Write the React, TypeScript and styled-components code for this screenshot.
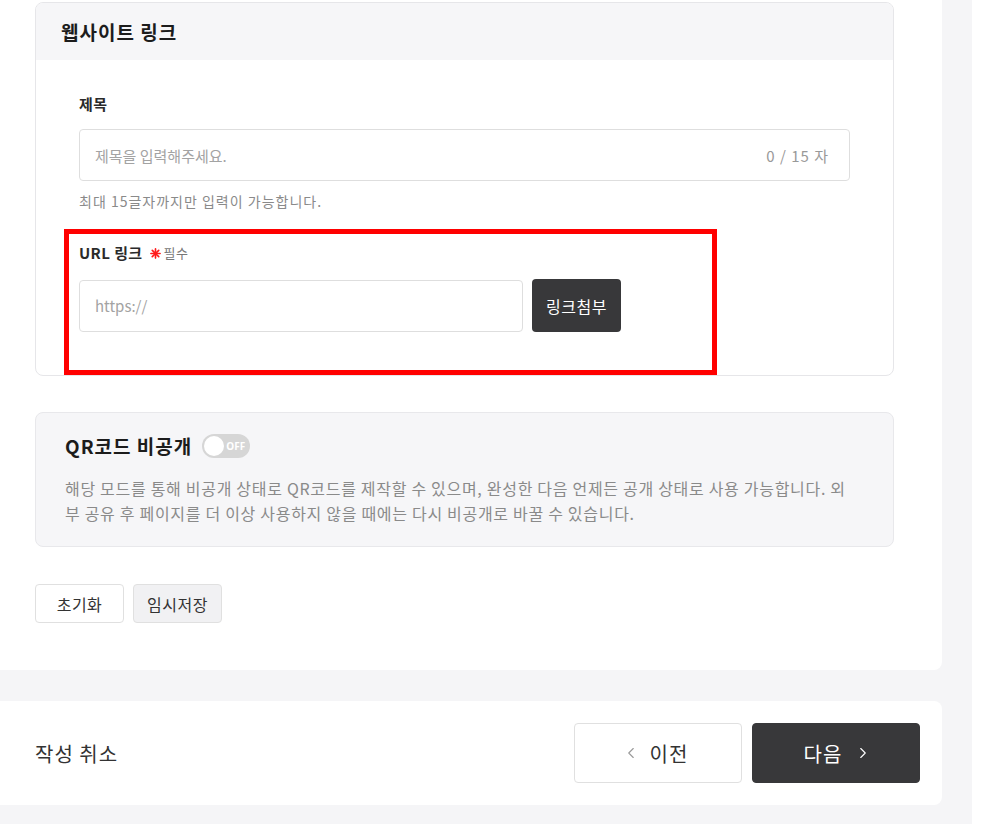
import React from "react";
import styled, { createGlobalStyle } from "styled-components";
import { ChevronLeft, ChevronRight } from "lucide-react";

const Global = createGlobalStyle`
  html, body { margin: 0; padding: 0; background: #ffffff; }
  * { box-sizing: border-box; }
  body { font-family: "Noto Sans CJK KR", "Noto Sans", sans-serif; color: #222; }
  input, button { font-family: inherit; }
`;

const Page = styled.div`
  display: flex;
  width: 1001px;
  height: 824px;
  overflow: hidden;
  background: #ffffff;
`;

const Main = styled.div`
  width: 972px;
  background: #f5f5f7;
  display: flex;
  flex-direction: column;
  padding-right: 30px;
`;

const FormCard = styled.div`
  background: #ffffff;
  border-radius: 0 0 8px 0;
  padding: 2px 48px 47px 35px;
  display: flex;
  flex-direction: column;
`;

const Section = styled.section`
  border: 1px solid #e6e6e9;
  border-radius: 8px;
  overflow: hidden;
  display: flex;
  flex-direction: column;
`;

const SectionHeader = styled.div`
  height: 57px;
  background: #f6f6f8;
  display: flex;
  align-items: center;
  padding-left: 25px;
`;

const SectionTitle = styled.h2`
  margin: 0;
  font-size: 19px;
  font-weight: 700;
  color: #1c1c1c;
  letter-spacing: 1px;
`;

const SectionBody = styled.div`
  padding: 33px 43px 0 43px;
  display: flex;
  flex-direction: column;
`;

const Label = styled.div`
  display: flex;
  align-items: center;
  gap: 7px;
  font-size: 15px;
  line-height: 22px;
  font-weight: 700;
  color: #2a2a2a;
  margin-bottom: 14px;
  letter-spacing: 0.4px;
`;

const Required = styled.span`
  display: inline-flex;
  align-items: center;
  gap: 3px;
  font-size: 13px;
  font-weight: 400;
  color: #777;
  letter-spacing: 0.6px;
`;

const InputBox = styled.div<{ $width?: string }>`
  height: 52px;
  width: ${(p) => p.$width || "100%"};
  border: 1px solid #dedede;
  border-radius: 4px;
  background: #fff;
  display: flex;
  align-items: center;
  padding: 0 20px 0 15px;
`;

const TextInput = styled.input`
  flex: 1;
  min-width: 0;
  border: none;
  outline: none;
  background: transparent;
  font-size: 15px;
  color: #333;
  padding: 0;
  &::placeholder { color: #a3a3a3; }
`;

const Counter = styled.span`
  font-size: 15px;
  color: #999;
  white-space: nowrap;
  letter-spacing: 1px;
`;

const Helper = styled.div`
  margin-top: 10px;
  font-size: 14px;
  line-height: 20px;
  color: #8a8a8a;
  letter-spacing: 1px;
`;

const Highlight = styled.div`
  margin: 18px 0 0 -15px;
  width: 653px;
  border: 5px solid #ff0000;
  padding: 8px 10px 38px 10px;
  display: flex;
  flex-direction: column;
`;

const UrlRow = styled.div`
  display: flex;
  align-items: center;
  gap: 9px;
  margin-top: 1px;
`;

const DarkButton = styled.button`
  width: 89px;
  height: 53px;
  padding: 0;
  border: none;
  border-radius: 4px;
  background: #38383a;
  color: #fff;
  font-size: 16px;
  letter-spacing: 0.5px;
  cursor: pointer;
`;

const QrBox = styled.section`
  margin-top: 36px;
  background: #f6f6f8;
  border: 1px solid #e8e8eb;
  border-radius: 8px;
  padding: 20px 29px 20px 29px;
`;

const QrHead = styled.div`
  display: flex;
  align-items: center;
  gap: 10px;
`;

const QrTitle = styled.h3`
  margin: 0;
  font-size: 19px;
  line-height: 26px;
  font-weight: 700;
  color: #1c1c1c;
  letter-spacing: 1px;
`;

const Toggle = styled.div`
  width: 48px;
  height: 24px;
  border-radius: 12px;
  background: #d6d6d6;
  display: flex;
  align-items: center;
  padding: 0 2px;
  gap: 2px;
`;

const Knob = styled.span`
  width: 20px;
  height: 20px;
  border-radius: 50%;
  background: #fff;
`;

const ToggleText = styled.span`
  font-size: 10px;
  font-weight: 700;
  color: #fff;
  font-family: "Noto Sans", sans-serif;
`;

const QrDesc = styled.p`
  margin: 17px 0 0 0;
  font-size: 16px;
  line-height: 25px;
  color: #8a8a8a;
  letter-spacing: 0.7px;
  padding-right: 10px;
`;

const ButtonRow = styled.div`
  margin-top: 37px;
  display: flex;
  gap: 9px;
`;

const SmallButton = styled.button<{ $filled?: boolean }>`
  width: 89px;
  height: 39px;
  border: 1px solid #e0e0e0;
  border-radius: 4px;
  background: ${(p) => (p.$filled ? "#f1f1f3" : "#fff")};
  color: #333;
  font-size: 16px;
  letter-spacing: 0.5px;
  cursor: pointer;
`;

const Gap = styled.div`
  height: 31px;
  flex-shrink: 0;
`;

const BottomBar = styled.div`
  height: 104px;
  background: #fff;
  border-radius: 0 8px 8px 0;
  display: flex;
  align-items: center;
  justify-content: space-between;
  padding: 0 22px 0 35px;
`;

const CancelText = styled.span`
  font-size: 20px;
  color: #333;
  letter-spacing: 1px;
`;

const NavGroup = styled.div`
  display: flex;
  gap: 10px;
`;

const NavButton = styled.button<{ $dark?: boolean }>`
  width: 168px;
  height: 60px;
  border-radius: 4px;
  border: 1px solid ${(p) => (p.$dark ? "#38383a" : "#e0e0e0")};
  background: ${(p) => (p.$dark ? "#38383a" : "#fff")};
  color: ${(p) => (p.$dark ? "#fff" : "#333")};
  font-size: 20px;
  letter-spacing: 1px;
  display: flex;
  align-items: center;
  justify-content: center;
  gap: ${(p) => (p.$dark ? "12px" : "10px")};
  padding-left: ${(p) => (p.$dark ? "10px" : "0")};
  cursor: pointer;
`;

const Side = styled.div`
  flex: 1;
  background: #fff;
`;

const Star = () => (
  <svg width="11" height="11" viewBox="0 0 12 12" aria-hidden>
    <g stroke="#ff1a1a" strokeWidth="1.8" strokeLinecap="round">
      <line x1="6" y1="1" x2="6" y2="11" />
      <line x1="1" y1="6" x2="11" y2="6" />
      <line x1="2.5" y1="2.5" x2="9.5" y2="9.5" />
      <line x1="9.5" y1="2.5" x2="2.5" y2="9.5" />
    </g>
  </svg>
);

export default function App() {
  return (
    <>
      <Global />
      <Page>
        <Main>
          <FormCard>
            <Section>
              <SectionHeader>
                <SectionTitle>웹사이트 링크</SectionTitle>
              </SectionHeader>
              <SectionBody>
                <Label>제목</Label>
                <InputBox>
                  <TextInput placeholder="제목을 입력해주세요." />
                  <Counter>0 / 15 자</Counter>
                </InputBox>
                <Helper>최대 15글자까지만 입력이 가능합니다.</Helper>
                <Highlight>
                  <Label>
                    URL 링크
                    <Required>
                      <Star />
                      필수
                    </Required>
                  </Label>
                  <UrlRow>
                    <InputBox $width="444px">
                      <TextInput placeholder="https://" />
                    </InputBox>
                    <DarkButton>링크첨부</DarkButton>
                  </UrlRow>
                </Highlight>
              </SectionBody>
            </Section>

            <QrBox>
              <QrHead>
                <QrTitle>QR코드 비공개</QrTitle>
                <Toggle>
                  <Knob />
                  <ToggleText>OFF</ToggleText>
                </Toggle>
              </QrHead>
              <QrDesc>
                해당 모드를 통해 비공개 상태로 QR코드를 제작할 수 있으며, 완성한 다음 언제든 공개 상태로 사용 가능합니다. 외부 공유 후 페이지를 더 이상 사용하지 않을 때에는 다시 비공개로 바꿀 수 있습니다.
              </QrDesc>
            </QrBox>

            <ButtonRow>
              <SmallButton>초기화</SmallButton>
              <SmallButton $filled>임시저장</SmallButton>
            </ButtonRow>
          </FormCard>
          <Gap />
          <BottomBar>
            <CancelText>작성 취소</CancelText>
            <NavGroup>
              <NavButton>
                <ChevronLeft size={18} strokeWidth={1.5} color="#9a9a9a" />
                이전
              </NavButton>
              <NavButton $dark>
                다음
                <ChevronRight size={18} strokeWidth={1.5} color="#ffffff" />
              </NavButton>
            </NavGroup>
          </BottomBar>
        </Main>
        <Side />
      </Page>
    </>
  );
}
